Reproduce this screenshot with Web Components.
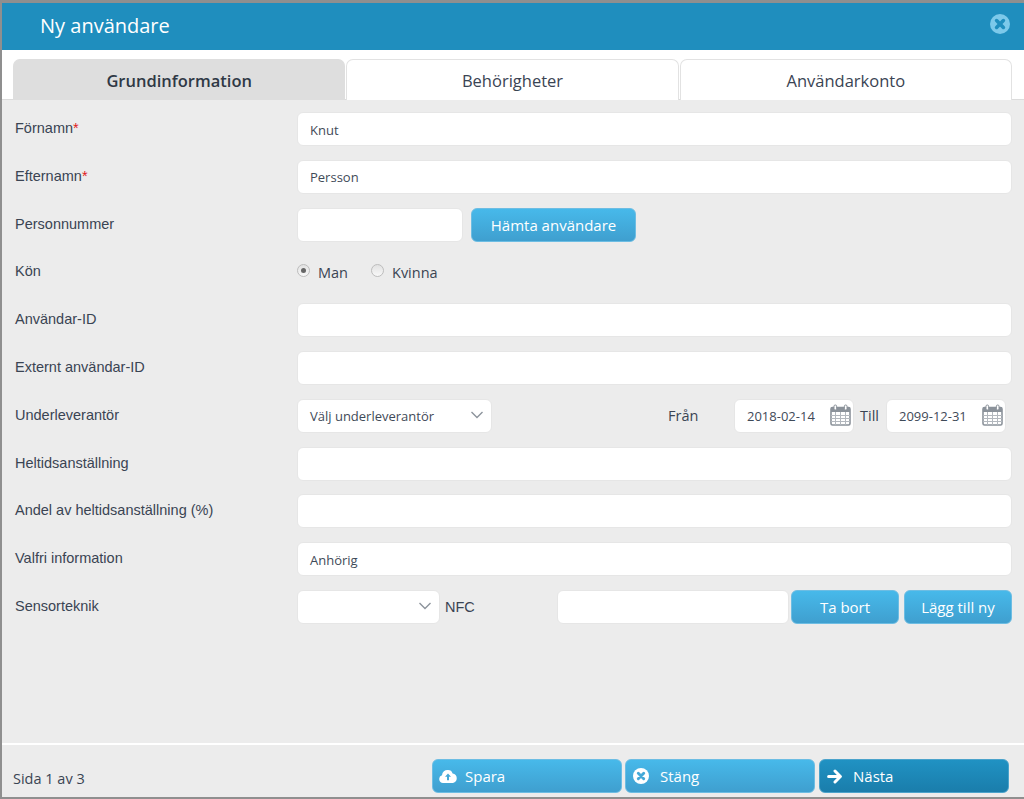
<!DOCTYPE html>
<html lang="sv"><head><meta charset="utf-8"><title>Ny användare</title>
<style>
html,body{margin:0;padding:0;height:799px;overflow:hidden;background:#8f8f8f}
body{font-family:"Liberation Sans",Arial,sans-serif;color:#3a4453}
</style></head><body>
<user-dialog>
  <form-row label="Förnamn" required value="Knut"></form-row>
  <form-row label="Efternamn" required value="Persson"></form-row>
  <form-row label="Personnummer" kind="pnr"></form-row>
  <form-row label="Kön" kind="gender"></form-row>
  <form-row label="Användar-ID"></form-row>
  <form-row label="Externt användar-ID"></form-row>
  <form-row label="Underleverantör" kind="supplier"></form-row>
  <form-row label="Heltidsanställning"></form-row>
  <form-row label="Andel av heltidsanställning (%)"></form-row>
  <form-row label="Valfri information" value="Anhörig"></form-row>
  <form-row label="Sensorteknik" kind="sensor"></form-row>
</user-dialog>
<script>
const ICONS={
 cloud:'<svg width="18" height="14" viewBox="0 0 18 14"><path fill="#fff" d="M4 14a4 4 0 0 1-1-7.8A5.5 5.5 0 0 1 9 1a4.8 4.8 0 0 1 4.6 3.4A4.9 4.9 0 0 1 14 14z"/><path fill="#45a9d8" d="M9 4.6l3 3.2h-2v3.4H8V7.8H6z"/></svg>',
 x:(bg,fg,s)=>`<svg width="${s}" height="${s}" viewBox="0 0 20 20"><circle cx="10" cy="10" r="10" fill="${bg}"/><path stroke="${fg}" stroke-width="3.6" stroke-linecap="round" d="M6.6 6.6l6.8 6.8M13.4 6.6l-6.8 6.8"/></svg>`,
 arrow:'<svg width="15" height="15" viewBox="0 0 15 15"><path fill="none" stroke="#fff" stroke-width="3" stroke-linejoin="round" stroke-linecap="round" d="M1.6 7.5h11M8 2l5.4 5.5L8 13"/></svg>',
 chev:'<svg width="14" height="8" viewBox="0 0 14 8"><path fill="none" stroke="#8d949c" stroke-width="1.4" d="M1.5 1l5.5 5.5L12.5 1"/></svg>',
 cal:'<svg width="21" height="22" viewBox="0 0 21 22"><rect x="1" y="3.5" width="19" height="17.5" rx="1.5" fill="#fff" stroke="#8b929a" stroke-width="1.6"/><path fill="#8b929a" d="M1 3.5h19V8H1z"/><path stroke="#b3b8be" stroke-width="1" d="M1 11.5h19M1 14.5h19M1 17.5h19M5.5 8v13M10.5 8v13M15.5 8v13"/><rect x="4" y="1" width="2.6" height="5" rx="1.2" fill="#fff" stroke="#8b929a"/><rect x="14.4" y="1" width="2.6" height="5" rx="1.2" fill="#fff" stroke="#8b929a"/></svg>'
};
const tpl=(html)=>{const t=document.createElement('template');t.innerHTML=html;return t};
function def(name,html,setup){
 const t=tpl(html);
 customElements.define(name,class extends HTMLElement{
  constructor(){super();this.attachShadow({mode:'open'}).appendChild(t.content.cloneNode(true))}
  connectedCallback(){if(setup)setup(this,this.shadowRoot)}
 });
}
def('text-box',`<style>
:host{display:block;height:34px;box-sizing:border-box;background:#fff;border:1px solid #e6e6e6;border-radius:6px;padding:0 0 0 12px;font:13px/34px "Open Sans",sans-serif;color:#3f4a58;position:relative;flex:none}
span{position:relative;top:-.5px;display:block;white-space:nowrap}
</style><span><slot></slot></span>`);
def('blue-button',`<style>
:host{display:flex;align-items:center;justify-content:center;box-sizing:border-box;height:34px;border-radius:6px;border:1px solid #6dbde3;background:linear-gradient(#47b9ea,#3f9fcf);color:#fff;font:15px "Open Sans",sans-serif;white-space:nowrap;flex:none}
:host([dark]){background:linear-gradient(#2092c3,#1a7dab);border-color:#4ba3cb}
</style><slot></slot>`);
def('tab-item',`<style>
:host{flex:1;box-sizing:border-box;height:41px;display:flex;align-items:center;justify-content:center;background:#fff;border:1px solid #e2e2e2;border-bottom:0;border-radius:7px 7px 0 0;font:16.5px "Open Sans",sans-serif;color:#3a4453}
:host([active]){background:#dedede;border-color:#dedede;font-weight:600;color:#2f3845}
</style><slot></slot>`);
def('user-dialog',`<style>
:host{display:flex;flex-direction:column;height:789px;margin:3px 0 0 2px;padding-bottom:0;background:#ececec;border-bottom:2px solid #8f8f8f;box-sizing:content-box;width:1022px;position:relative;height:794px}
header{height:47px;flex:none;background:#1f8ebe;display:flex;align-items:center;justify-content:space-between;padding:0 14px 0 38px;color:#fff;font:20px "Open Sans",sans-serif}
header span{position:relative;top:-1px}
.close{display:flex;position:relative;top:-3px}
nav{flex:none;background:#fff;display:flex;gap:1px;padding:9px 12px 0 11px;height:50px;box-sizing:border-box;border-bottom:1px solid #dcdcdc}
main{flex:1;padding:12px 12px 0 13px;display:flex;flex-direction:column}
footer{flex:none;height:54px;border-top:2px solid #fff;box-sizing:border-box;display:flex;align-items:flex-start;padding:14px 15px 0 11px;font:14.5px "Open Sans",sans-serif;color:#3a4453}
.page{margin-top:10px;flex:1}
.fb{display:flex;gap:3px}
blue-button{width:190px;justify-content:flex-start;padding-left:6px;gap:8px;font-size:15px}
blue-button svg{display:block}
</style>
<header><span>Ny användare</span><div class="close" id="close"></div></header>
<nav><tab-item active>Grundinformation</tab-item><tab-item>Behörigheter</tab-item><tab-item>Användarkonto</tab-item></nav>
<main><slot></slot></main>
<footer><div class="page">Sida 1 av 3</div><div class="fb" id="fb"></div></footer>`,(el,s)=>{
 s.getElementById('close').innerHTML=ICONS.x('#7cc9ea','#1f8ebe',20);
 s.getElementById('fb').innerHTML=`<blue-button>${ICONS.cloud}<span>Spara</span></blue-button><blue-button style="gap:11px;padding-left:7px">${ICONS.x('#fff','#45a9d8',16)}<span>Stäng</span></blue-button><blue-button dark style="gap:11px;margin-left:1px;padding-left:7px">${ICONS.arrow}<span>Nästa</span></blue-button>`;
});
def('form-row',`<style>
:host{display:grid;grid-template-columns:282px 1fr;align-items:center;height:34px;margin-bottom:13.8px;font:14.5px "Liberation Sans",sans-serif;color:#3a4453}
label{position:relative;top:-1px;white-space:nowrap}
i{font-style:normal;color:#e02020}
.c{display:flex;align-items:center;min-width:0}
.radio{display:flex;align-items:center;gap:8px;font:14.5px "Open Sans",sans-serif;margin-right:23px}
.dot{width:13px;height:13px;border-radius:50%;border:1px solid #bdbdbd;background:linear-gradient(#e2e2e2,#f8f8f8);box-sizing:border-box;position:relative;top:-2px;flex:none}
.dot.on::after{content:"";position:absolute;left:3px;top:3px;width:5px;height:5px;border-radius:50%;background:#666}
.ch{position:absolute;right:8px;top:11px;display:flex}
.cal{position:absolute;right:0;top:5px;display:flex}
text-box.full{width:100%}
</style><label id="l"></label><div class="c" id="c"></div>`,(el,s)=>{
 s.getElementById('l').innerHTML=el.getAttribute('label')+(el.hasAttribute('required')?'<i>*</i>':'');
 const c=s.getElementById('c'),k=el.getAttribute('kind'),v=el.getAttribute('value')||'';
 const date=(d)=>`<text-box style="width:120px">${d}<span class="cal" style="position:absolute;right:2px;top:5px;display:flex">${ICONS.cal}</span></text-box>`;
 if(k==='pnr')c.innerHTML=`<text-box style="width:166px"></text-box><blue-button style="width:165px;margin-left:8px">Hämta användare</blue-button>`;
 else if(k==='gender'){c.innerHTML=`<div class="radio"><span class="dot on"></span>Man</div><div class="radio"><span class="dot"></span>Kvinna</div>`}
 else if(k==='supplier')c.innerHTML=`<text-box style="width:195px">Välj underleverantör<span class="ch" style="position:absolute;right:7px;top:12px;display:flex">${ICONS.chev}</span></text-box><span style="margin-left:176px;width:66px;font:14.5px 'Open Sans',sans-serif">Från</span>${date('2018-02-14')}<span style="margin:0 9px 0 6px;font:14.5px 'Open Sans',sans-serif">Till</span>${date('2099-12-31').replace('width:120px','width:120px;margin-left:-2px')}`;
 else if(k==='sensor')c.innerHTML=`<text-box style="width:143px"><span class="ch" style="position:absolute;right:7px;top:12px;display:flex">${ICONS.chev}</span></text-box><span style="margin-left:5px;width:112px">NFC</span><text-box style="width:232px"></text-box><blue-button style="width:108px;margin-left:2px">Ta bort</blue-button><blue-button style="width:108px;margin-left:5px">Lägg till ny</blue-button>`;
 else c.innerHTML=`<text-box class="full">${v}</text-box>`;
});
</script></body></html>
